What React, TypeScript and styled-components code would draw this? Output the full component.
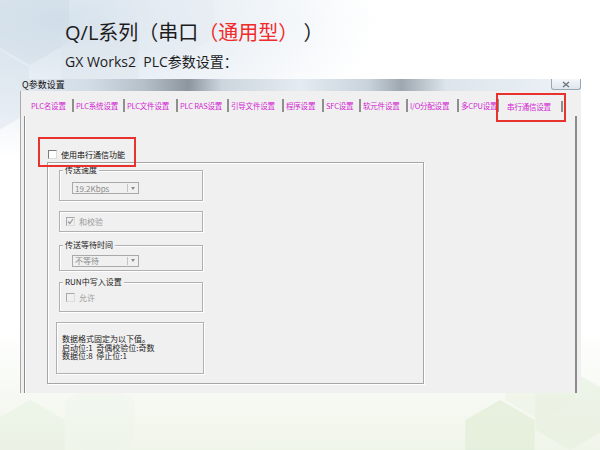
import React from "react";
import styled, { createGlobalStyle } from "styled-components";

const GlobalStyle = createGlobalStyle`
  html, body {
    margin: 0;
    padding: 0;
    background: #ffffff;
  }
`;

const cjk = `"Open Sans", "Noto Sans CJK SC", sans-serif`;
const dlgFont = `"Noto Sans CJK SC", "Liberation Sans", sans-serif`;

const Page = styled.div`
  position: relative;
  width: 600px;
  height: 450px;
  overflow: hidden;
  font-family: ${cjk};
  background:
    radial-gradient(ellipse 320px 140px at 60px 20px, rgba(200, 216, 230, 0.75), rgba(255, 255, 255, 0) 100%),
    linear-gradient(to top, #f0f5ea 0px, #f7faf4 60px, #ffffff 120px);
`;

const Backdrop = styled.svg`
  position: absolute;
  inset: 0;
  width: 600px;
  height: 450px;
  pointer-events: none;
`;

const Content = styled.div`
  position: relative;
  display: flex;
  flex-direction: column;
`;

const Header = styled.div`
  padding: 20px 0 0 65px;
`;

const Title = styled.h1`
  margin: 0;
  font-size: 20px;
  line-height: 26px;
  font-weight: 400;
  color: #1c1c1c;
`;

const Red = styled.span`
  color: #f22a2a;
`;

const Subtitle = styled.p`
  margin: 7px 0 0;
  font-size: 14px;
  line-height: 18px;
  color: #1c1c1c;
`;

const Dialog = styled.div`
  position: relative;
  margin: 8px 0 0 20px;
  width: 561px;
  display: flex;
  flex-direction: column;
`;

const TitleBar = styled.div`
  height: 12px;
  display: flex;
  align-items: center;
  justify-content: space-between;
  background: linear-gradient(
    to right,
    #dfe7ee 0%,
    #d3dde7 12%,
    #b6c0c9 22%,
    #8d969e 30%,
    #cdd6de 36%,
    #e4ebf1 50%,
    #c9d3dc 62%,
    #9ea7af 68%,
    #dde5ec 76%,
    #eef3f7 100%
  );
`;

const Caption = styled.span`
  font-family: ${dlgFont};
  font-size: 9px;
  line-height: 12px;
  color: #111;
  padding-left: 2px;
`;

const CloseBtn = styled.div`
  width: 28px;
  height: 10px;
  align-self: flex-start;
  border: 1px solid #9aa6b2;
  border-top: none;
  border-radius: 0 0 3px 3px;
  background: linear-gradient(#f4f7fa, #dfe6ec);
  display: flex;
  align-items: center;
  justify-content: center;
`;

const Body = styled.div`
  height: 299px;
  background: #f0f0f0;
  border-left: 1px solid #a9a9a9;
  padding: 3px 4px 0 3px;
  display: flex;
  flex-direction: column;
`;

const TabStrip = styled.div`
  height: 22px;
  display: flex;
  align-items: center;
  padding-left: 5px;
`;

const Tab = styled.div<{ $w: number; $active?: boolean }>`
  width: ${(p) => p.$w}px;
  height: ${(p) => (p.$active ? 11 : 13)}px;
  box-sizing: border-box;
  display: flex;
  align-items: center;
  justify-content: ${(p) => (p.$active ? "center" : "flex-start")};
  padding: 0 ${(p) => (p.$active ? 4 : 0)}px 0 2px;
  border-right: 2px solid #8f8f8f;
  font-family: ${dlgFont};
  font-size: 7.5px;
  letter-spacing: -0.2px;
  white-space: nowrap;
  overflow: hidden;
  color: #d21fd2;
  margin-top: ${(p) => (p.$active ? 3 : 0)}px;
`;

const TabPanel = styled.div`
  position: relative;
  flex: 1;
  border-left: 1px solid #8c8c8c;
  border-right: 2px solid #8c8c8c;
  box-shadow: inset 1px 0 0 #ffffff;
  display: flex;
  flex-direction: column;
`;

const EnableRow = styled.label`
  display: flex;
  align-items: center;
  gap: 4px;
  margin: 33px 0 0 23px;
  height: 10px;
  font-family: ${dlgFont};
  font-size: 8px;
  color: #111;
`;

const Box = styled.span<{ $disabled?: boolean }>`
  width: 7px;
  height: 7px;
  flex: none;
  border: 1px solid ${(p) => (p.$disabled ? "#a8a8a8" : "#7c7c7c")};
  border-right-color: #dcdcdc;
  border-bottom-color: #dcdcdc;
  background: ${(p) => (p.$disabled ? "#f0f0f0" : "#ffffff")};
  display: flex;
  align-items: center;
  justify-content: center;
`;

const MainGroup = styled.div`
  margin: 3px 0 0 22px;
  width: 364px;
  height: 220px;
  border: 1px solid #a6a6a6;
  box-shadow: inset 1px 1px 0 #ffffff, 1px 1px 0 #ffffff;
  display: flex;
  flex-direction: column;
  padding-left: 11px;
`;

const Group = styled.div<{ $top: number; $h: number }>`
  position: relative;
  margin-top: ${(p) => p.$top}px;
  width: 144px;
  height: ${(p) => p.$h}px;
  box-sizing: border-box;
  border: 1px solid #b0b0b0;
  box-shadow: inset 1px 1px 0 #ffffff, 1px 1px 0 #ffffff;
  display: flex;
  align-items: center;
  padding-left: 12px;
`;

const Legend = styled.span`
  position: absolute;
  top: -6px;
  left: 3px;
  padding: 0 2px;
  background: #f0f0f0;
  font-family: ${dlgFont};
  font-size: 8px;
  line-height: 10px;
  color: #222;
`;

const Select = styled.div`
  margin-top: 5px;
  width: 67px;
  height: 12px;
  box-sizing: border-box;
  border: 1px solid #a9a9a9;
  background: #f0f0f0;
  display: flex;
  align-items: center;
  justify-content: space-between;
  font-family: ${dlgFont};
  font-size: 8px;
  color: #8c8c8c;
  padding-left: 2px;
`;

const Arrow = styled.span`
  width: 9px;
  height: 8px;
  margin-right: 1px;
  border-left: 1px solid #c4c4c4;
  display: flex;
  align-items: center;
  justify-content: center;
  &::after {
    content: "";
    border-left: 2.5px solid transparent;
    border-right: 2.5px solid transparent;
    border-top: 3px solid #8c8c8c;
  }
`;

const CheckRow = styled.span`
  display: flex;
  align-items: center;
  gap: 4px;
  margin-left: -6px;
  font-family: ${dlgFont};
  font-size: 8px;
  color: #9a9a9a;
`;

const InfoBox = styled.div`
  margin: 10px 0 0 -3px;
  width: 148px;
  height: 52px;
  box-sizing: border-box;
  border: 1px solid #b0b0b0;
  box-shadow: inset 1px 1px 0 #ffffff, 1px 1px 0 #ffffff;
  padding: 12px 0 0 5px;
  font-family: ${dlgFont};
  font-size: 8px;
  line-height: 8.5px;
  color: #1a1a1a;
  white-space: pre;
`;

const Highlight = styled.div<{ $l: number; $t: number; $w: number; $h: number }>`
  position: absolute;
  left: ${(p) => p.$l}px;
  top: ${(p) => p.$t}px;
  width: ${(p) => p.$w}px;
  height: ${(p) => p.$h}px;
  box-sizing: border-box;
  border: 2px solid #e8322e;
  pointer-events: none;
`;

const tabs: { label: string; w: number }[] = [
  { label: "PLC名设置", w: 45 },
  { label: "PLC系统设置", w: 51 },
  { label: "PLC文件设置", w: 53 },
  { label: "PLC RAS设置", w: 51 },
  { label: "引导文件设置", w: 55 },
  { label: "程序设置", w: 40 },
  { label: "SFC设置", w: 37 },
  { label: "软元件设置", w: 47 },
  { label: "I/O分配设置", w: 51 },
  { label: "多CPU设置", w: 40 },
];

const Tick: React.FC = () => (
  <svg width="7" height="7" viewBox="0 0 7 7">
    <path d="M1 3.5 L2.8 5.5 L6 1" fill="none" stroke="#9a9a9a" strokeWidth="1.2" />
  </svg>
);

const Hexes: React.FC = () => {
  const hex = (cx: number, cy: number, r: number) =>
    [0, 1, 2, 3, 4, 5]
      .map((i) => {
        const a = (Math.PI / 3) * i + Math.PI / 6;
        return `${(cx + r * Math.cos(a)).toFixed(1)},${(cy + r * Math.sin(a)).toFixed(1)}`;
      })
      .join(" ");
  return (
    <Backdrop viewBox="0 0 600 450">
      <polygon points={hex(30, 20, 45)} fill="#c9d6e2" opacity="0.35" />
      <polygon points={hex(100, 60, 45)} fill="#dbe4ec" opacity="0.4" />
      <polygon points={hex(-10, 90, 45)} fill="#d1dde8" opacity="0.35" />
      <polygon points={hex(175, 15, 45)} fill="#e4ebf1" opacity="0.35" />
      <polygon points={hex(30, 440, 40)} fill="#e6efdf" opacity="0.5" />
      <polygon points={hex(100, 420, 40)} fill="#eef3ea" opacity="0.45" />
      <polygon points={hex(500, 440, 40)} fill="#dcebd0" opacity="0.55" />
      <polygon points={hex(570, 410, 40)} fill="#e4efdc" opacity="0.55" />
      <polygon points={hex(540, 380, 40)} fill="#e9f2e2" opacity="0.5" />
    </Backdrop>
  );
};

const App: React.FC = () => {
  return (
    <>
      <GlobalStyle />
      <Page>
        <Hexes />
        <Content>
          <Header>
            <Title>
              Q/L系列（串口<Red>（通用型）</Red> ）
            </Title>
            <Subtitle>GX Works2&nbsp; PLC参数设置：</Subtitle>
          </Header>
          <Dialog>
            <TitleBar>
              <Caption>Q参数设置</Caption>
              <CloseBtn>
                <svg width="8" height="7" viewBox="0 0 8 7">
                  <path d="M1 1 L7 6 M7 1 L1 6" stroke="#6d747b" strokeWidth="1.4" fill="none" />
                </svg>
              </CloseBtn>
            </TitleBar>
            <Body>
              <TabStrip>
                {tabs.map((t) => (
                  <Tab key={t.label} $w={t.w}>
                    {t.label}
                  </Tab>
                ))}
                <Tab $w={64} $active>
                  串行通信设置
                </Tab>
              </TabStrip>
              <TabPanel>
                <EnableRow>
                  <Box />
                  使用串行通信功能
                </EnableRow>
                <MainGroup>
                  <Group $top={7} $h={31}>
                    <Legend>传送速度</Legend>
                    <Select>
                      19.2Kbps
                      <Arrow />
                    </Select>
                  </Group>
                  <Group $top={10} $h={21}>
                    <CheckRow>
                      <Box $disabled>
                        <Tick />
                      </Box>
                      和校验
                    </CheckRow>
                  </Group>
                  <Group $top={13} $h={26}>
                    <Legend>传送等待时间</Legend>
                    <Select>
                      不等待
                      <Arrow />
                    </Select>
                  </Group>
                  <Group $top={11} $h={30}>
                    <Legend>RUN中写入设置</Legend>
                    <CheckRow>
                      <Box $disabled />
                      允许
                    </CheckRow>
                  </Group>
                  <InfoBox>
                    {"数据格式固定为以下值。\n启动位:1  奇偶校验位:奇数\n数据位:8  停止位:1"}
                  </InfoBox>
                </MainGroup>
                <Highlight $l={13} $t={21} $w={98} $h={30} />
              </TabPanel>
            </Body>
            <Highlight $l={476} $t={14} $w={70} $h={29} />
          </Dialog>
        </Content>
      </Page>
    </>
  );
};

export default App;
